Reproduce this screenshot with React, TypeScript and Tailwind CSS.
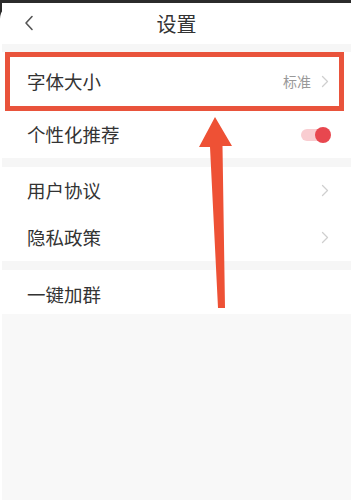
import React from 'react';

const Chevron = () => (
  <svg width="8" height="13" viewBox="0 0 8 13" fill="none">
    <path d="M1.5 1.5L6.5 6.5L1.5 11.5" stroke="#cfcfcf" strokeWidth="1.3" strokeLinecap="round" strokeLinejoin="round" />
  </svg>
);

function Row({ label, right, className = '' }: { label: string; right?: React.ReactNode; className?: string }) {
  return (
    <div className={`flex items-center justify-between bg-white pl-[25px] pr-[22px] ${className}`}>
      <span className="text-[18.5px] text-[#333]">{label}</span>
      {right}
    </div>
  );
}

export default function App() {
  return (
    <div
      className="relative h-[500px] w-[351px] overflow-hidden bg-[#2b2b2b]"
      style={{ fontFamily: '"Noto Sans CJK SC", "Noto Sans", sans-serif' }}
    >
      <div className="mt-[3px] flex h-[497px] flex-col rounded-t-[16px] bg-white pl-[2px]">
        {/* header */}
        <div className="relative flex h-[41px] items-center justify-center bg-white">
          <svg className="absolute left-[22px] top-[12px]" width="10" height="16" viewBox="0 0 10 16" fill="none">
            <path d="M8 1.5L2 8L8 14.5" stroke="#555" strokeWidth="1.6" strokeLinecap="round" strokeLinejoin="round" />
          </svg>
          <span className="text-[20px] text-[#333]">设置</span>
        </div>
        <div className="h-[8px] bg-[#f6f6f6]" />

        <div className="relative">
          <Row
            label="字体大小"
            className="h-[59px]"
            right={
              <div className="flex items-center gap-[10px]">
                <span className="text-[14px] text-[#999]">标准</span>
                <Chevron />
              </div>
            }
          />
          <div className="absolute left-[3px] right-[7px] top-0 bottom-0 border-[5px] border-[#e9533b]" />
        </div>

        <Row
          label="个性化推荐"
          className="h-[47px]"
          right={
            <div className="relative mr-[-2px] flex h-[16px] w-[30px] items-center">
              <div className="h-[12px] w-[28px] rounded-full bg-[#f9cdd1]" />
              <div className="absolute right-0 top-0 h-[16px] w-[16px] rounded-full bg-[#e8474f]" />
            </div>
          }
        />
        <div className="h-[9px] bg-[#f6f6f6]" />
        <Row label="用户协议" className="h-[47px]" right={<Chevron />} />
        <Row label="隐私政策" className="h-[47px]" right={<Chevron />} />
        <div className="h-[9px] bg-[#f6f6f6]" />
        <Row label="一键加群" className="h-[44px] pt-[6px]" />
        <div className="flex-1 bg-[#f8f8f8]" />
      </div>

      {/* annotation arrow */}
      <svg className="pointer-events-none absolute left-0 top-0" width="351" height="500" viewBox="0 0 351 500">
        <polygon
          points="215,117 232,146 222.5,146 225,308 218,308 210,147 199,147"
          fill="#ee5135"
        />
      </svg>
    </div>
  );
}
